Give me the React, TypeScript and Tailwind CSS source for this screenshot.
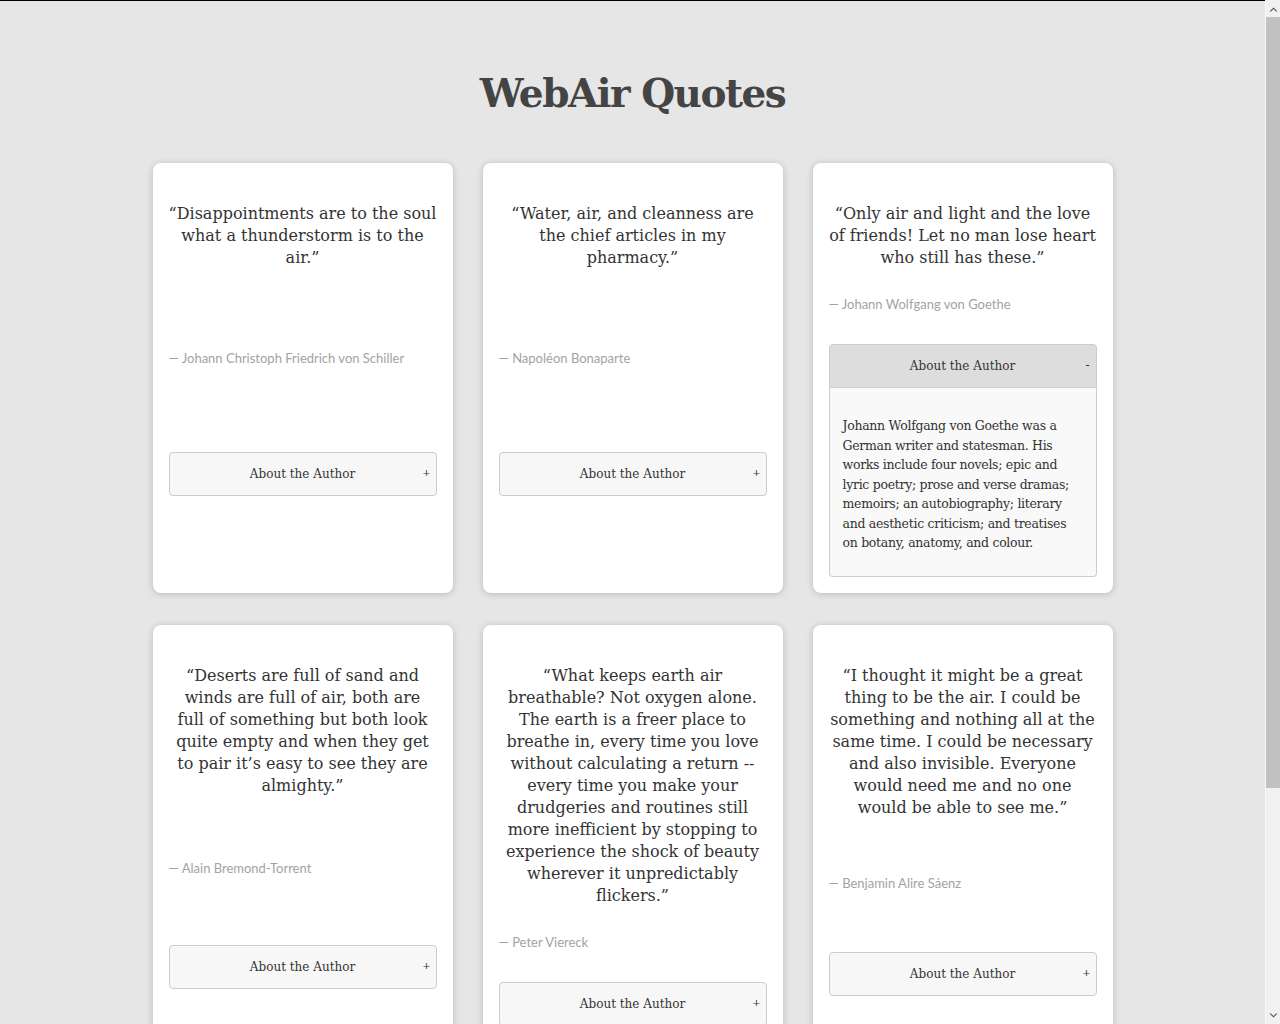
import React from "react";

type Q = { lines: string[]; author: string; bio?: string[]; open?: boolean };

const quotes: Q[] = [
  {
    lines: ["“Disappointments are to the soul", "what a thunderstorm is to the", "air.”"],
    author: "— Johann Christoph Friedrich von Schiller",
  },
  {
    lines: ["“Water, air, and cleanness are", "the chief articles in my", "pharmacy.”"],
    author: "— Napoléon Bonaparte",
  },
  {
    lines: ["“Only air and light and the love", "of friends! Let no man lose heart", "who still has these.”"],
    author: "— Johann Wolfgang von Goethe",
    bio: [
      "Johann Wolfgang von Goethe was a",
      "German writer and statesman. His",
      "works include four novels; epic and",
      "lyric poetry; prose and verse dramas;",
      "memoirs; an autobiography; literary",
      "and aesthetic criticism; and treatises",
      "on botany, anatomy, and colour.",
    ],
    open: true,
  },
  {
    lines: [
      "“Deserts are full of sand and",
      "winds are full of air, both are",
      "full of something but both look",
      "quite empty and when they get",
      "to pair it’s easy to see they are",
      "almighty.”",
    ],
    author: "— Alain Bremond-Torrent",
  },
  {
    lines: [
      "“What keeps earth air",
      "breathable? Not oxygen alone.",
      "The earth is a freer place to",
      "breathe in, every time you love",
      "without calculating a return --",
      "every time you make your",
      "drudgeries and routines still",
      "more inefficient by stopping to",
      "experience the shock of beauty",
      "wherever it unpredictably",
      "flickers.”",
    ],
    author: "— Peter Viereck",
  },
  {
    lines: [
      "“I thought it might be a great",
      "thing to be the air. I could be",
      "something and nothing all at the",
      "same time. I could be necessary",
      "and also invisible. Everyone",
      "would need me and no one",
      "would be able to see me.”",
    ],
    author: "— Benjamin Alire Sáenz",
  },
];

const serif = "font-['DejaVu_Serif',serif]";

function Lines({ lines }: { lines: string[] }) {
  return (
    <>
      {lines.map((l, i) => (
        <React.Fragment key={i}>
          {l}
          {i < lines.length - 1 ? <br /> : null}
        </React.Fragment>
      ))}
    </>
  );
}

function Card({ q }: { q: Q }) {
  return (
    <div className="bg-white rounded-lg shadow-[0_1px_7px_rgba(0,0,0,0.2)] flex flex-col px-[16px] pt-[16px] pb-[16px]">
      <div className="grow pt-[24px] pb-[25px]">
        <p className={`${serif} text-center text-[16px] leading-[22px] text-[#333] whitespace-nowrap`}>
          <Lines lines={q.lines} />
        </p>
      </div>
      <div className="grow pb-[30px]">
        <div className="font-['Lato',sans-serif] text-[13px] leading-[20px] text-[#a3a3a3]">{q.author}</div>
      </div>
      <div className="grow">
        {q.open ? (
          <div>
            <div className={`relative h-[44px] flex items-center justify-center bg-[#dddddd] border border-[#cccccc] rounded-t ${serif} text-[12px] text-[#333]`}>
              About the Author
              <span className="absolute right-[3px] w-[10px] text-center top-[11px] text-[12px]">-</span>
            </div>
            <div className={`bg-[#f9f9f9] border border-t-0 border-[#cccccc] rounded-b px-[13px] pt-[28px] pb-[23px] ${serif} text-[12.5px] leading-[19.5px] text-[#333] whitespace-nowrap tracking-[-0.3px]`}>
              <Lines lines={q.bio ?? []} />
            </div>
          </div>
        ) : (
          <div className="mb-[26px]">
            <div className={`relative h-[44px] flex items-center justify-center bg-[#f7f7f7] border border-[#cccccc] rounded ${serif} text-[12px] text-[#333]`}>
              About the Author
              <span className="absolute right-[4px] w-[10px] text-center top-[12px] text-[10px]">+</span>
            </div>
          </div>
        )}
      </div>
    </div>
  );
}

function FakeScrollbar() {
  return (
    <div className="fixed top-0 right-0 w-[15px] h-screen bg-[#f1f1f1] border-l border-[#f8f8f8] flex flex-col items-center">
      <div className="h-[17px] w-full flex items-center justify-center">
        <svg width="9" height="6" viewBox="0 0 9 6">
          <path d="M0.5 5.5 L4.5 1.5 L8.5 5.5 L7 5.5 L4.5 3 L2 5.5 Z" fill="#505050" />
        </svg>
      </div>
      <div className="w-full h-[771px] bg-[#c1c1c1]" />
      <div className="grow" />
      <div className="h-[17px] w-full flex items-center justify-center">
        <svg width="9" height="6" viewBox="0 0 9 6">
          <path d="M0.5 0.5 L4.5 4.5 L8.5 0.5 L7 0.5 L4.5 3 L2 0.5 Z" fill="#505050" />
        </svg>
      </div>
    </div>
  );
}

export default function App() {
  return (
    <div className="min-h-screen bg-[#e6e6e6]">
      <div className="w-[1265px] border-t border-black pb-[246px]">
        <h1 className={`${serif} font-bold text-center text-[39px] leading-[56px] text-[#444] pt-[64px] pb-[42px] tracking-[-1.5px]`}>
          WebAir Quotes
        </h1>
        <div className="w-[960px] mx-auto grid grid-cols-3 gap-x-[30px] gap-y-[32px]">
          {quotes.map((q, i) => (
            <Card key={i} q={q} />
          ))}
        </div>
      </div>
      <FakeScrollbar />
    </div>
  );
}
